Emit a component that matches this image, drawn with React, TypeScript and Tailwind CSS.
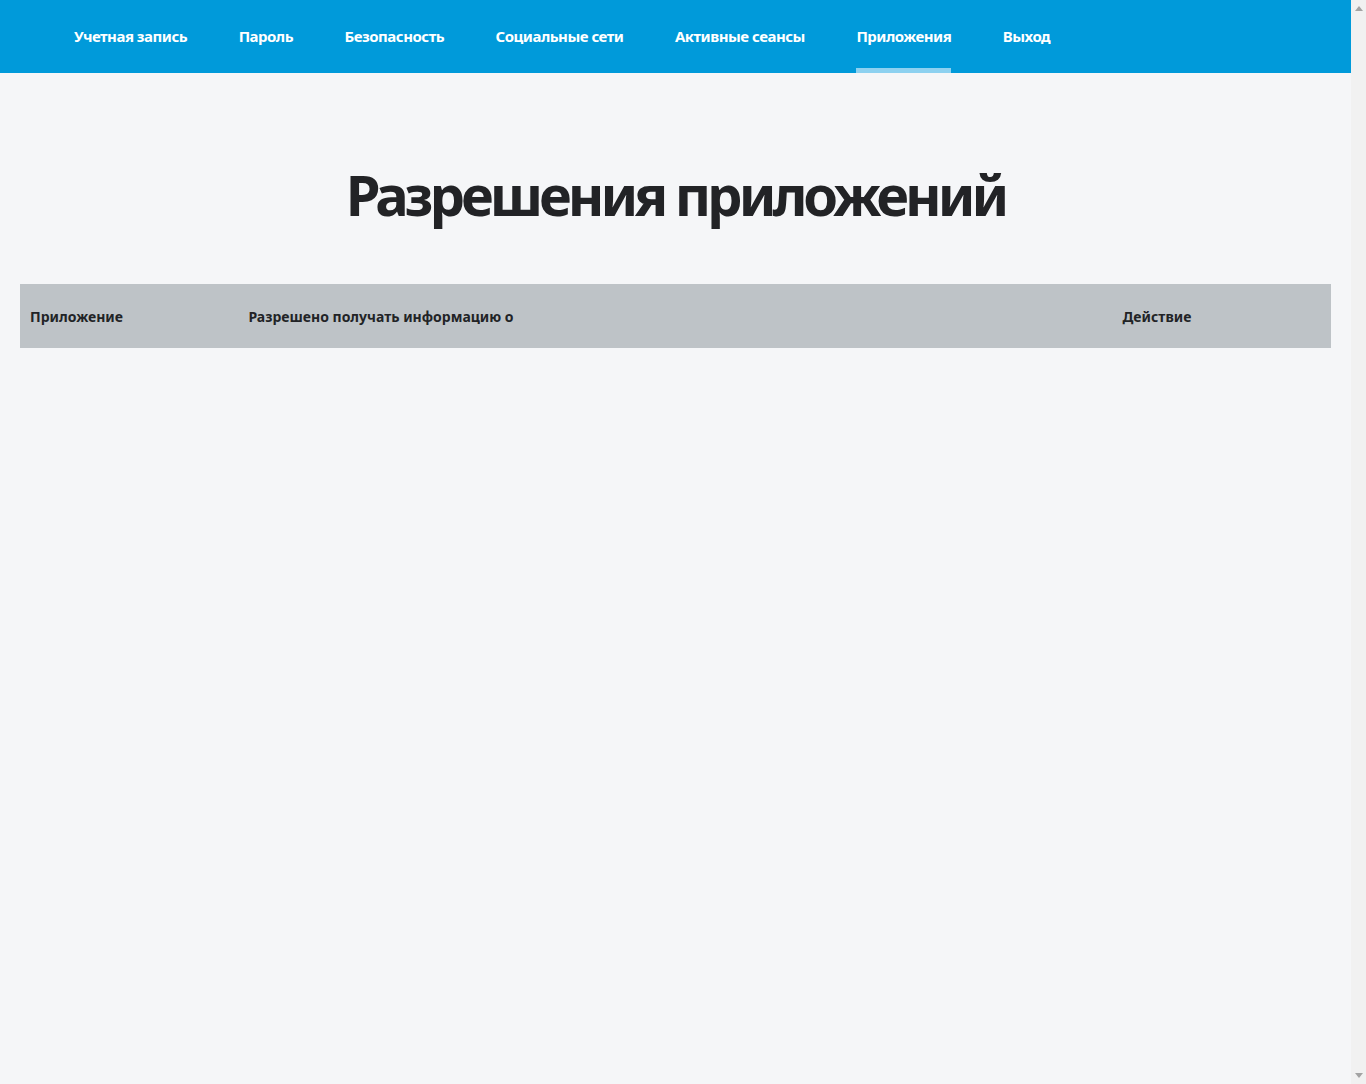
import React from "react";

const navItems = [
  "Учетная запись",
  "Пароль",
  "Безопасность",
  "Социальные сети",
  "Активные сеансы",
  "Приложения",
  "Выход",
];

const active = "Приложения";

export default function App() {
  return (
    <div
      className="h-[1084px] flex bg-[#f5f6f8] overflow-hidden"
      style={{ fontFamily: '"Noto Sans", "Open Sans", sans-serif' }}
    >
      <div className="flex-1 min-w-0">
        {/* Top navigation */}
        <nav className="h-[73px] bg-[#009ada] flex items-stretch pl-[74px] gap-[51.5px]">
          {navItems.map((item) => (
            <a
              key={item}
              href="#"
              className="relative flex items-center text-white text-[15px] font-bold tracking-[-0.5px]"
            >
              {item}
              {item === active && (
                <span className="absolute left-0 right-0 bottom-0 h-[5px] bg-[#8dd1f0]" />
              )}
            </a>
          ))}
        </nav>

        {/* Content */}
        <main className="px-5">
          <h1 className="pt-[86px] pb-[55px] text-center text-[56px] leading-[70px] font-bold tracking-[-4px] text-[#222326]">
            Разрешения приложений
          </h1>

          <table className="w-full table-fixed border-collapse">
            <thead>
              <tr className="h-16 bg-[#bec3c7] text-left text-[14px] text-[#222326]">
                <th className="w-1/6 px-[10px] font-bold">Приложение</th>
                <th className="w-4/6 px-[10px] font-bold">
                  Разрешено получать информацию о
                </th>
                <th className="w-1/6 px-[10px] font-bold">Действие</th>
              </tr>
            </thead>
            <tbody />
          </table>
        </main>
      </div>

      {/* Browser scrollbar */}
      <div className="w-[15px] shrink-0 bg-[#f1f1f1] flex flex-col justify-between items-center py-[6px] text-[#a3a3a3]">
        <svg width="8" height="5" viewBox="0 0 8 5">
          <path d="M4 0 L8 5 L0 5 Z" fill="currentColor" />
        </svg>
        <svg width="8" height="5" viewBox="0 0 8 5">
          <path d="M0 0 L8 0 L4 5 Z" fill="currentColor" />
        </svg>
      </div>
    </div>
  );
}
